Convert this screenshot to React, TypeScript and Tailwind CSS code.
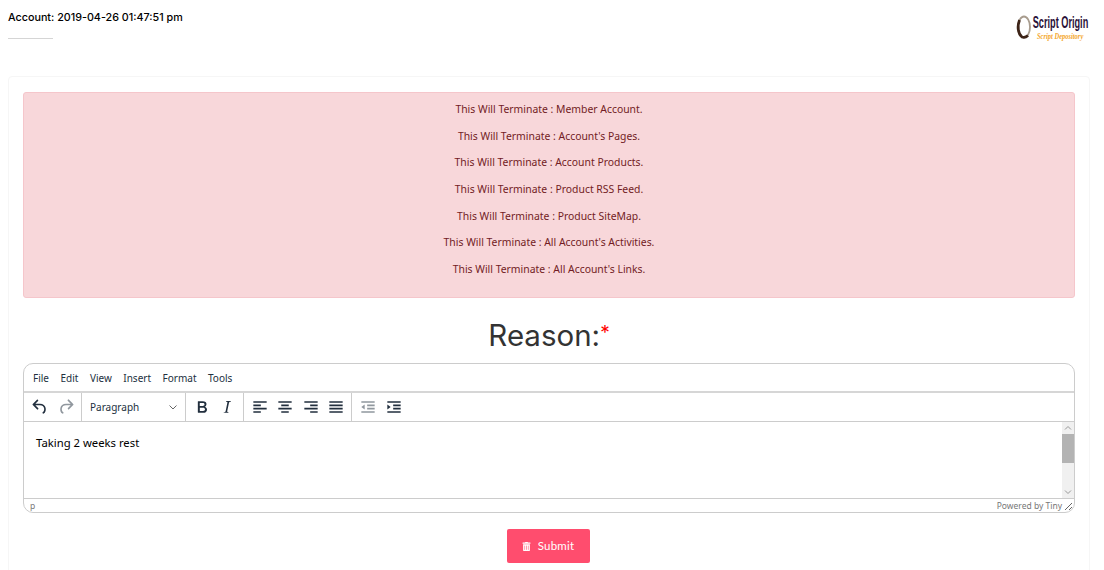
import { FaTrashAlt } from 'react-icons/fa'

const rows = [
  'Member Account.',
  "Account's Pages.",
  'Account Products.',
  'Product RSS Feed.',
  'Product SiteMap.',
  "All Account's Activities.",
  "All Account's Links.",
]

const menus = ['File', 'Edit', 'View', 'Insert', 'Format', 'Tools']

const ToolIcon = ({ d, dim }: { d: string; dim?: boolean }) => (
  <svg width="20" height="20" viewBox="0 0 24 24" className={dim ? 'fill-[#222f3e]/50' : 'fill-[#222f3e]'}>
    <path d={d} />
  </svg>
)

const icons = {
  undo: 'M6.4 8H12c3.7 0 6.2 2 6.8 5.1.6 2.7-.4 5.6-2.3 6.8a1 1 0 0 1-1-1.8c1.1-.6 1.8-2.7 1.4-4.6-.5-2.1-2.1-3.5-4.9-3.5H6.4l3.3 3.3a1 1 0 1 1-1.4 1.4l-5-5a1 1 0 0 1 0-1.4l5-5a1 1 0 0 1 1.4 1.4L6.4 8z',
  redo: 'M17.6 10H12c-2.8 0-4.4 1.4-4.9 3.5-.4 2 .3 4 1.4 4.6a1 1 0 1 1-1 1.8c-2-1.2-2.9-4.1-2.3-6.8.6-3 3-5.1 6.8-5.1h5.6l-3.3-3.3a1 1 0 1 1 1.4-1.4l5 5a1 1 0 0 1 0 1.4l-5 5a1 1 0 0 1-1.4-1.4l3.3-3.3z',
  bold: 'M7.8 19c-.3 0-.5 0-.6-.2l-.2-.5V5.7c0-.2 0-.4.2-.5l.6-.2h5c1.5 0 2.7.3 3.5 1 .7.6 1.1 1.4 1.1 2.5a3 3 0 0 1-.6 1.9c-.4.6-1 1-1.6 1.2.4.1.9.3 1.3.6s.8.7 1 1.2c.4.4.5 1 .5 1.6 0 1.3-.4 2.3-1.3 3-.8.7-2.1 1-3.8 1H7.8zm5-8.3c.6 0 1.2-.1 1.6-.5.4-.3.6-.7.6-1.3 0-1.1-.8-1.7-2.3-1.7H9.3v3.5h3.4zm.5 6c.7 0 1.3-.1 1.7-.4.4-.4.6-.9.6-1.5s-.2-1-.7-1.4c-.4-.3-1-.4-2-.4H9.4v3.8h4z',
  italic: 'M16.7 4.7l-.1.9h-.3c-.6 0-1 0-1.4.3-.3.3-.4.6-.5 1.1l-2.1 9.8v.6c0 .5.4.8 1.4.8h.2l-.2.8H8l.2-.8h.2c1.1 0 1.8-.5 2-1.5l2-9.8.1-.5c0-.6-.4-.8-1.4-.8h-.3l.2-.9h5.8z',
  left: 'M4 5h16v2H4zM4 9h9v2H4zM4 13h16v2H4zM4 17h9v2H4z',
  center: 'M4 5h16v2H4zM7.500 9h9v2h-9zM4 13h16v2H4zM7.500 17h9v2h-9z',
  right: 'M4 5h16v2H4zM11 9h9v2h-9zM4 13h16v2H4zM11 17h9v2h-9z',
  justify: 'M4 5h16v2H4zM4 9h16v2H4zM4 13h16v2H4zM4 17h16v2H4z',
  outdent: 'M4 5h16v2H4zM11 9h9v2h-9zM11 13h9v2h-9zM4 17h16v2H4zM8 9v6l-4-3z',
  indent: 'M4 5h16v2H4zM11 9h9v2h-9zM11 13h9v2h-9zM4 17h16v2H4zM4 9l4 3-4 3z',
}

const Logo = () => (
  <div className="flex items-center w-[72px] h-[30px]">
    <svg width="16" height="30" viewBox="0 0 16 30" className="shrink-0">
      <ellipse cx="8" cy="15" rx="6" ry="10.500" fill="none" stroke="#a89c8e" strokeWidth="1.800" />
      <path d="M3.500 8C1 14 2 22 6 25c2 .8 4 .3 6-1.500" fill="none" stroke="#3d2418" strokeWidth="2.800" />
    </svg>
    <div className="flex flex-col items-center w-[56px]">
      <span className="font-['Liberation_Sans',sans-serif] font-bold text-[17px] leading-[18px] text-[#2a1138] whitespace-nowrap scale-x-[.54]">Script Origin</span>
      <span className="font-['Liberation_Serif',serif] italic font-bold text-[9px] leading-[9px] text-[#f4a62a] whitespace-nowrap scale-x-[.72]">Script Depository</span>
    </div>
  </div>
)

export default function App() {
  return (
    <div className="h-[570px] w-[1104px] overflow-hidden bg-white font-['Noto_Sans',sans-serif]">
      <div className="flex justify-between h-[76px] pl-2 pr-[16px]">
        <div className="w-[175px] pt-[10px]">
          <p className="font-['Inter',sans-serif] font-medium text-[10.75px] leading-[16px] text-black whitespace-nowrap">Account: 2019-04-26 01:47:51 pm</p>
          <div className="w-[45px] mt-[12px] border-t border-[#d5d5d5]" />
        </div>
        <div className="pt-[12px]">
          <Logo />
        </div>
      </div>

      <div className="mx-2 w-[1082px] min-h-[600px] border border-[#f6f6f6] rounded-[4px] px-[14px] pt-[15px]">
        <div className="h-[206px] rounded-[3px] border border-[#f5c6cb] bg-[#f8d7da] pt-[3px] text-center text-[10.4px] text-[#721c24]">
          {rows.map((r) => (
            <p key={r} className="h-[26.67px] leading-[26.67px]">This Will Terminate : {r}</p>
          ))}
        </div>

        <h2 className="mt-[17px] h-[48px] text-center font-['Inter',sans-serif] text-[29.5px] leading-[40px] text-[#333]">
          Reason:<span className="text-[19px] leading-none align-[7px] text-[#f00]">*</span>
        </h2>

        <div className="h-[150px] rounded-[10px] border border-[#ccc] overflow-hidden flex flex-col">
          <div className="h-[29px] flex items-center gap-[11.5px] pl-[9px] pt-[1px] text-[10px] text-[#222f3e] border-b-2 border-[#d6d6d6]">
            {menus.map((m) => (
              <span key={m}>{m}</span>
            ))}
          </div>
          <div className="h-[29px] flex items-center border-b border-[#ccc]">
            <div className="flex items-center h-full w-[58px] pl-[5.5px] gap-[6.5px] border-r border-[#ccc]">
              <ToolIcon d={icons.undo} />
              <ToolIcon d={icons.redo} dim />
            </div>
            <div className="flex items-center justify-between h-full w-[104px] pl-[8px] pr-[7px] text-[10px] text-[#222f3e] border-r border-[#ccc]">
              <span>Paragraph</span>
              <svg width="10" height="10" viewBox="0 0 10 10" fill="none" stroke="#666" strokeWidth="1">
                <path d="M1.500 3.500 5 7l3.500-3.500" />
              </svg>
            </div>
            <div className="flex items-center h-full w-[58px] pl-[6px] gap-[4.5px] border-r border-[#ccc]">
              <ToolIcon d={icons.bold} />
              <ToolIcon d={icons.italic} />
            </div>
            <div className="flex items-center h-full w-[108px] pl-[5.5px] gap-[5.5px] border-r border-[#ccc]">
              <ToolIcon d={icons.left} />
              <ToolIcon d={icons.center} />
              <ToolIcon d={icons.right} />
              <ToolIcon d={icons.justify} />
            </div>
            <div className="flex items-center h-full pl-[6px] gap-[5.5px]">
              <ToolIcon d={icons.outdent} dim />
              <ToolIcon d={icons.indent} />
            </div>
          </div>
          <div className="flex-1 flex min-h-0">
            <div className="flex-1 pl-[12px] pt-[13px] text-[11.3px] leading-[16px] text-black">Taking 2 weeks rest</div>
            <div className="w-[12px] bg-[#f0f0f0] flex flex-col items-center justify-between">
              <div className="h-[12px] w-full flex items-center justify-center">
                <svg width="8" height="8" viewBox="0 0 8 8" fill="none" stroke="#999"><path d="M1 5.500 4 2.500l3 3" /></svg>
              </div>
              <div className="h-[29px] w-full bg-[#b3b3b3]" />
              <div className="flex-1" />
              <div className="h-[12px] w-full flex items-center justify-center">
                <svg width="8" height="8" viewBox="0 0 8 8" fill="none" stroke="#999"><path d="M1 2.500 4 5.500l3-3" /></svg>
              </div>
            </div>
          </div>
          <div className="h-[14px] flex items-center justify-between border-t border-[#ccc] pl-[6px] pr-[1px] pt-[1px] text-[8.5px] text-[#777]">
            <span>p</span>
            <div className="flex items-center gap-[1px]">
              <span>Powered by Tiny</span>
              <svg width="10" height="10" viewBox="0 0 10 10" stroke="#666" fill="none"><path d="M2 9 9 2M6 9l3-3" /></svg>
            </div>
          </div>
        </div>

        <div className="flex justify-center mt-[16px] pr-[2px]">
          <button className="w-[83px] h-[34px] rounded-[2px] bg-[#ff4d6e] text-white text-[11.5px] tracking-[.2px] flex items-center justify-center gap-[7px] font-['Lato',sans-serif]">
            <FaTrashAlt className="text-[9px]" />
            Submit
          </button>
        </div>
      </div>
    </div>
  )
}
